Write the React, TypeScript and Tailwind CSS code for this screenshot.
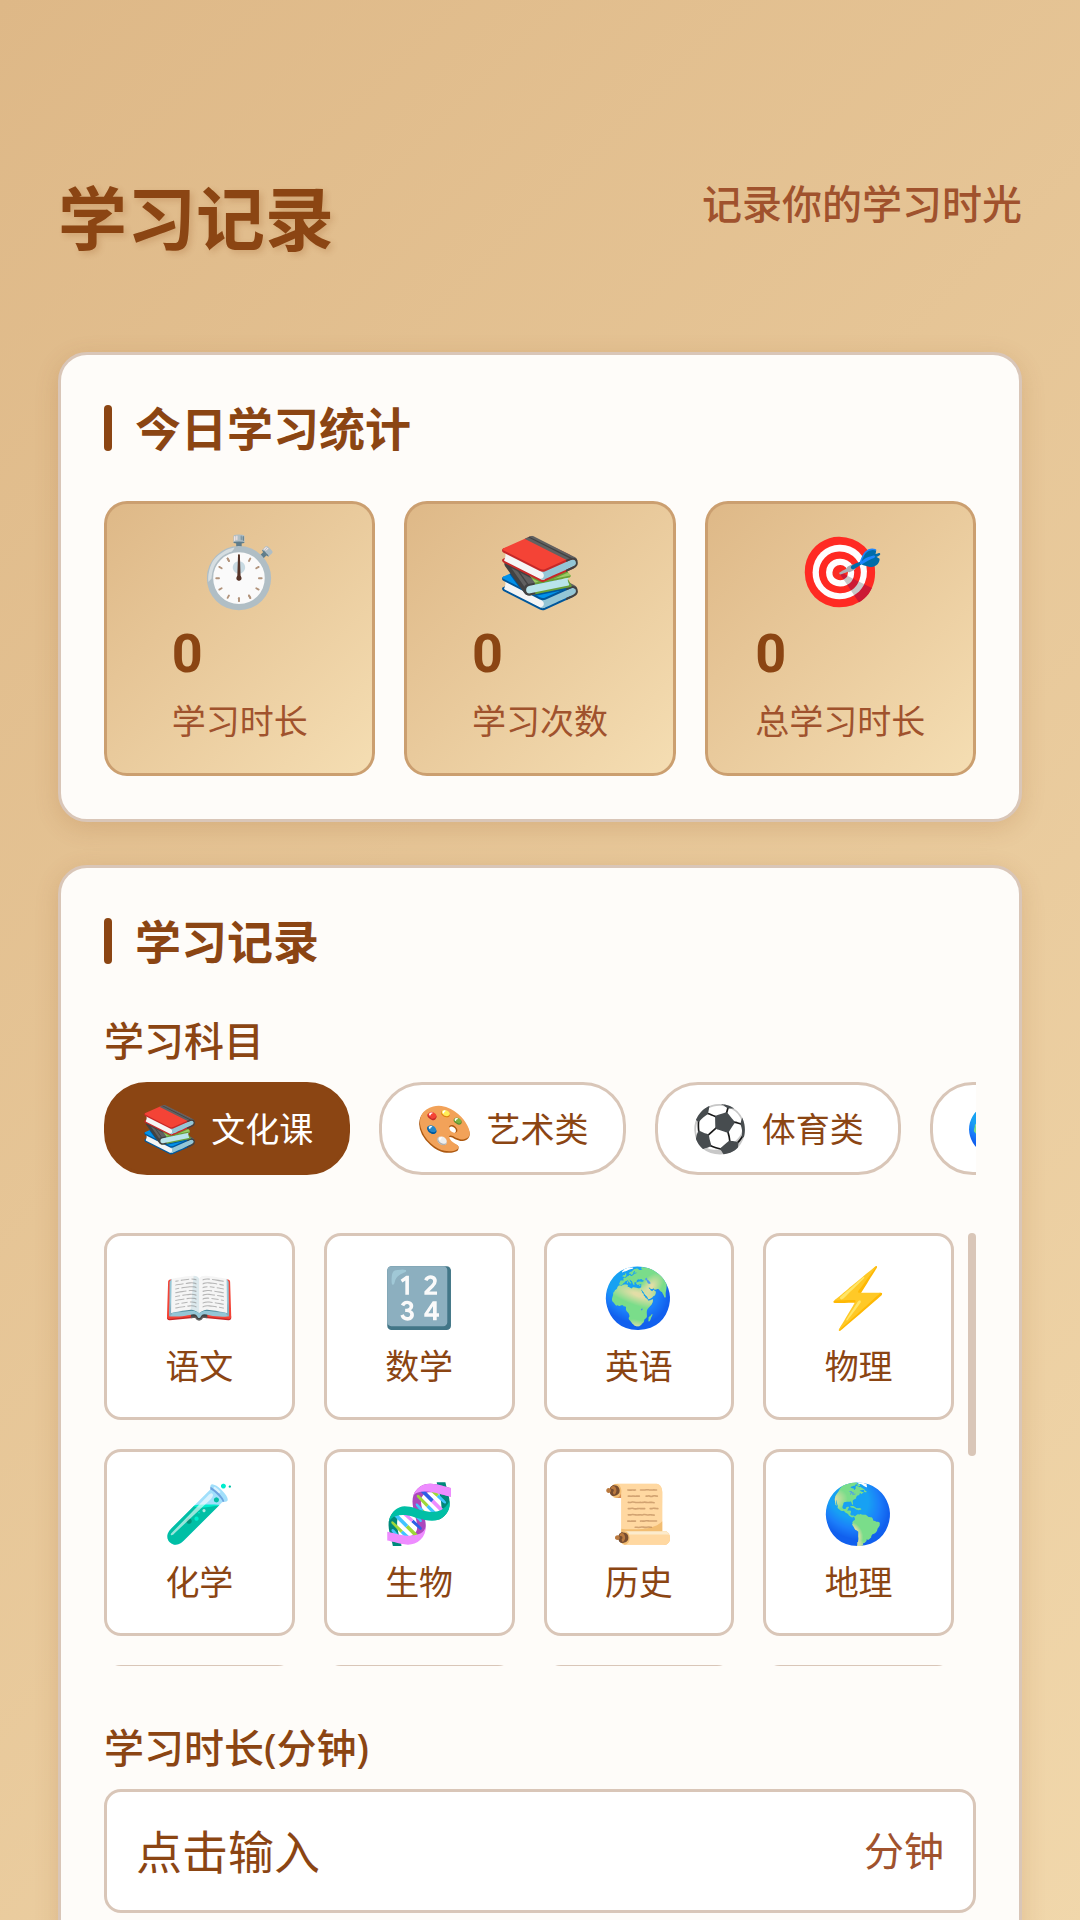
import { useState } from "react";

const stats = [
  { icon: "⏱️", value: 0, label: "学习时长" },
  { icon: "📚", value: 0, label: "学习次数" },
  { icon: "🎯", value: 0, label: "总学习时长" },
];

const categories = [
  { icon: "📚", name: "文化课" },
  { icon: "🎨", name: "艺术类" },
  { icon: "⚽", name: "体育类" },
];

const subjects = [
  { icon: "📖", name: "语文" },
  { icon: "🔢", name: "数学" },
  { icon: "🌍", name: "英语" },
  { icon: "⚡", name: "物理" },
  { icon: "🧪", name: "化学" },
  { icon: "🧬", name: "生物" },
  { icon: "📜", name: "历史" },
  { icon: "🌎", name: "地理" },
];

// Tiles whose top edge peeks out under the second row of subjects.
const nextRow = [0, 1, 2, 3];

function Emoji({ children, className }: { children: string; className: string }) {
  return (
    <span aria-hidden="true" className={`block font-['Noto_Color_Emoji',sans-serif] ${className}`}>
      {children}
    </span>
  );
}

function Card({ title, children }: { title: string; children: React.ReactNode }) {
  return (
    <section className="shrink-0 rounded-[29px] border-3 border-[#d9c6b8] bg-[#fefcf9] p-[43px] shadow-[0_6px_24px_rgba(139,69,19,0.16)]">
      <div className="mb-[43px] flex items-center gap-[23px]">
        <span className="h-[46px] w-[8px] rounded-[4px] bg-[#8b4513]" />
        <h2 className="text-[46px] leading-[60px] font-bold">{title}</h2>
      </div>
      {children}
    </section>
  );
}

export default function App() {
  const [category, setCategory] = useState("文化课");
  const [minutes, setMinutes] = useState("");

  return (
    <main className="flex h-screen flex-col gap-[43px] overflow-hidden bg-[linear-gradient(135deg,#deb887,#f5deb3_123%)] px-[58px] pt-[174px] font-['Noto_Sans','Noto_Sans_CJK_SC',sans-serif] text-[#8b4513]">
      <header className="flex items-start justify-between pb-[47px]">
        <h1 className="text-[69px] leading-[88px] font-bold [text-shadow:3px_3px_6px_rgba(139,69,19,0.2)]">
          学习记录
        </h1>
        <p className="text-[40px] leading-[60px] font-medium text-[#a0522d]">记录你的学习时光</p>
      </header>

      <Card title="今日学习统计">
        <div className="grid grid-cols-3 gap-[29px]">
          {stats.map((s) => (
            <div
              key={s.label}
              className="flex flex-col items-center rounded-[23px] border-3 border-[#cb9f70] bg-linear-135 from-[#deb887] to-[#f5deb3] bg-origin-border pt-[27px] pb-[23px]"
            >
              <Emoji className="text-[69px] leading-[84px]">{s.icon}</Emoji>
              <div>
                <div className="font-['Roboto',sans-serif] text-[54px] leading-[78px] font-bold">{s.value}</div>
                <div className="text-[34px] leading-[57px] text-[#a0522d]">{s.label}</div>
              </div>
            </div>
          ))}
        </div>
      </Card>

      <Card title="学习记录">
        <h3 className="mb-[14px] text-[40px] leading-[54px] font-medium">学习科目</h3>
        <div className="flex gap-[29px] overflow-hidden">
          {categories.map((c) => (
            <button
              key={c.name}
              type="button"
              aria-pressed={c.name === category}
              onClick={() => setCategory(c.name)}
              className={`flex h-[93px] shrink-0 items-center gap-[13px] rounded-[43px] border-3 px-[34px] ${
                c.name === category
                  ? "border-[#8b4513] bg-[#8b4513] text-white"
                  : "border-[#d9c6b8] bg-white"
              }`}
            >
              <Emoji className="text-[46px] leading-[60px]">{c.icon}</Emoji>
              <span className="text-[34px] leading-[46px]">{c.name}</span>
            </button>
          ))}
          <button
            type="button"
            aria-label="语言类"
            className="flex h-[93px] w-[246px] shrink-0 items-center rounded-[43px] border-3 border-[#d9c6b8] bg-white px-[34px]"
          >
            <Emoji className="text-[46px] leading-[60px]">🌍</Emoji>
          </button>
        </div>

        <div className="mt-[58px] flex h-[433px] items-start gap-[14px] overflow-hidden">
          <div className="grid flex-1 grid-cols-4 gap-[29px]">
            {subjects.map((s) => (
              <button
                key={s.name}
                type="button"
                className="flex h-[187px] flex-col items-center rounded-[17px] border-3 border-[#d9c6b8] bg-white pt-[26px]"
              >
                <Emoji className="text-[58px] leading-[72px]">{s.icon}</Emoji>
                <span className="text-[34px] leading-[64px]">{s.name}</span>
              </button>
            ))}
            {nextRow.map((i) => (
              <div key={i} className="h-[187px] rounded-[17px] border-3 border-[#d9c6b8] bg-white" />
            ))}
          </div>
          <div className="h-[223px] w-[8px] rounded-[4px] bg-[#d9c6b8]" />
        </div>

        <label htmlFor="minutes" className="mt-[55px] mb-[14px] block text-[40px] leading-[54px] font-medium">
          学习时长(分钟)
        </label>
        <div className="flex h-[124px] items-center rounded-[17px] border-3 border-[#d9c6b8] bg-white px-[29px]">
          <input
            id="minutes"
            inputMode="numeric"
            placeholder="点击输入"
            value={minutes}
            onChange={(e) => setMinutes(e.target.value)}
            className="min-w-0 flex-1 text-[46px] leading-[60px] outline-none placeholder:text-[#8b4513]"
          />
          <span className="text-[40px] leading-[54px] text-[#a0522d]">分钟</span>
        </div>
      </Card>
    </main>
  );
}
